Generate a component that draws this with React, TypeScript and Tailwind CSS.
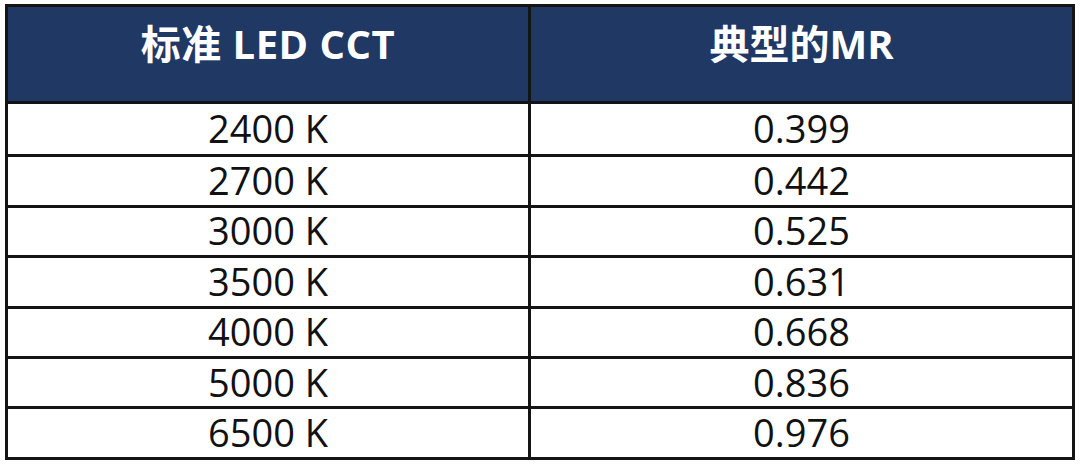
import React from "react";

const rows = [
  ["2400 K", "0.399"],
  ["2700 K", "0.442"],
  ["3000 K", "0.525"],
  ["3500 K", "0.631"],
  ["4000 K", "0.668"],
  ["5000 K", "0.836"],
  ["6500 K", "0.976"],
];

const font = {
  fontFamily: '"Open Sans", "Noto Sans CJK SC", sans-serif',
};

export default function App() {
  return (
    <div className="w-[1080px] h-[466px] bg-white pt-[4px] pl-[5px]" style={font}>
      <div className="w-[1070px] border-[3px] border-[#141414]">
        {/* Header */}
        <div className="flex h-[97px] bg-[#1f3864] border-b-[3px] border-[#141414] text-white font-bold text-[40px]">
          <div className="w-[523px] border-r-[3px] border-[#141414] flex justify-center pt-[12px] leading-[50px] tracking-[0.5px]">
            标准 LED CCT
          </div>
          <div className="flex-1 flex justify-center pt-[12px] leading-[50px]">
            典型的MR
          </div>
        </div>

        {/* Body */}
        {rows.map(([cct, mr], i) => (
          <div
            key={cct}
            className={`flex h-[50.4px] text-[38px] text-[#111] leading-none ${
              i > 0 ? "border-t-[3px] border-[#141414]" : ""
            }`}
          >
            <div className="w-[523px] border-r-[3px] border-[#141414] flex items-center justify-center pb-[2px]">
              {cct}
            </div>
            <div className="flex-1 flex items-center justify-center pb-[2px]">{mr}</div>
          </div>
        ))}
      </div>
    </div>
  );
}
